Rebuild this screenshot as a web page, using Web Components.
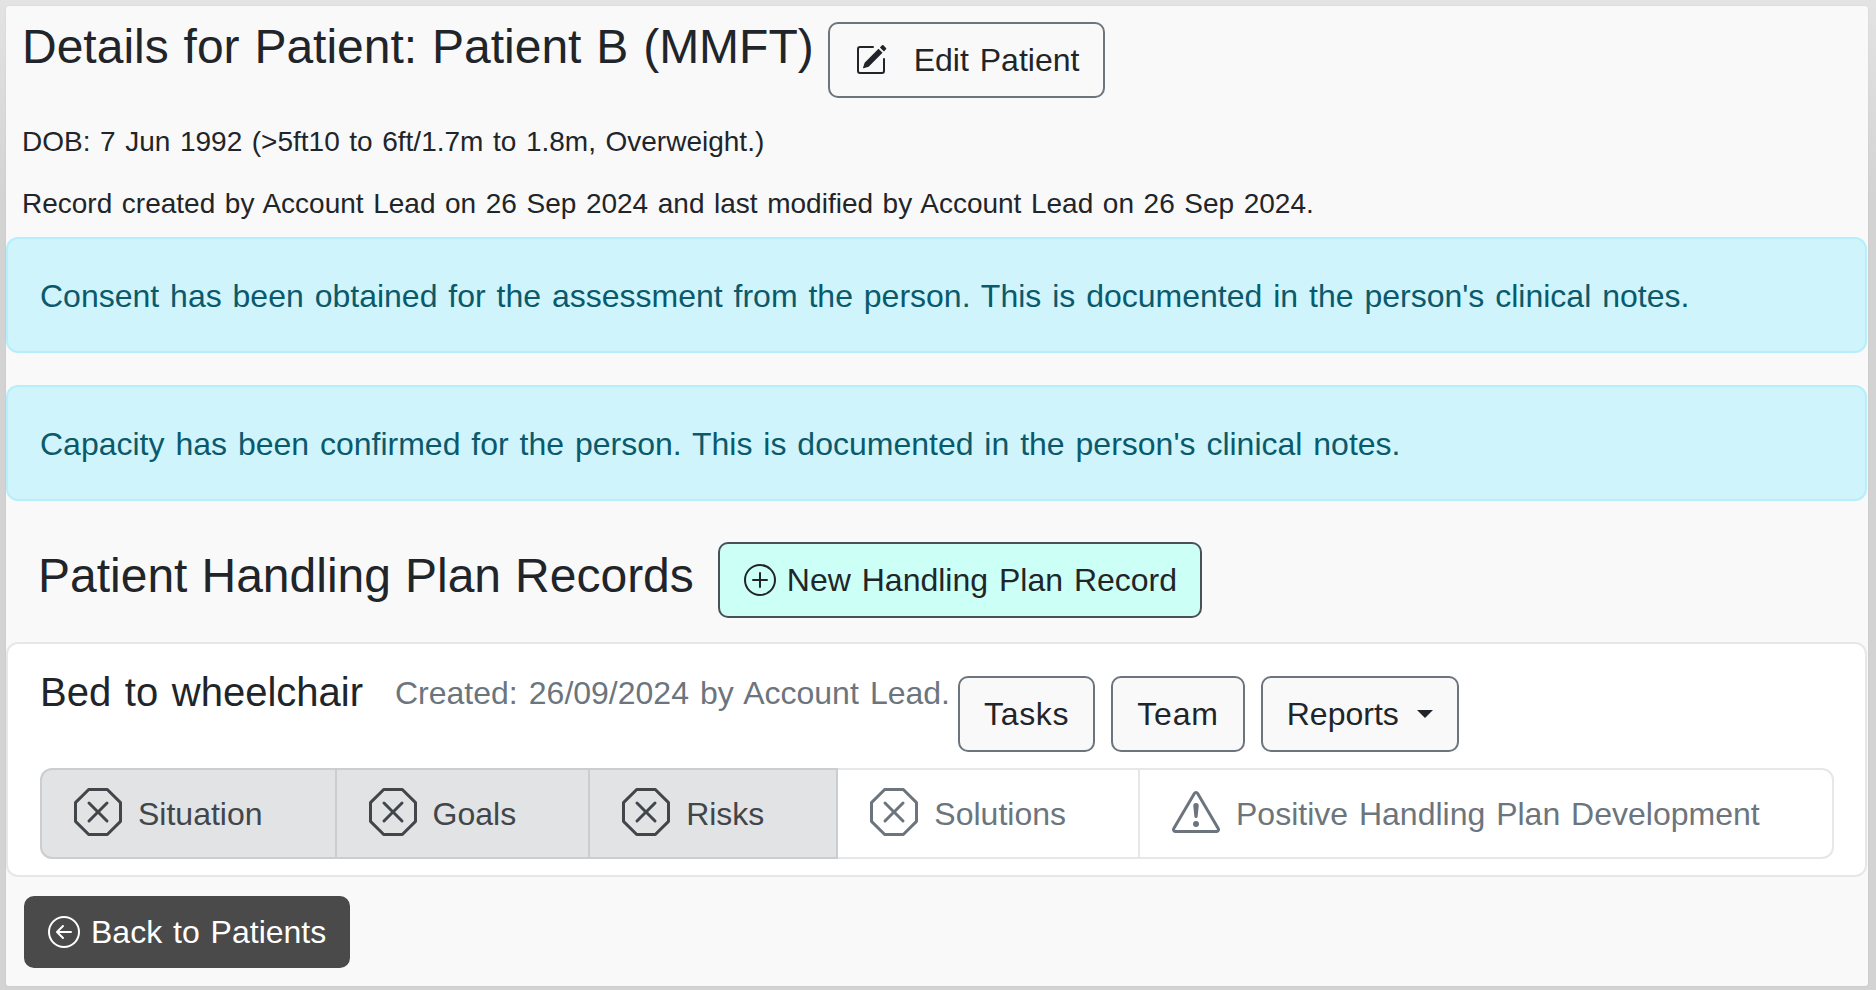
<!DOCTYPE html>
<html lang="en"><head><meta charset="utf-8"><title>Patient</title>
<style>
html,body{margin:0;padding:0;}
body{height:990px;overflow:hidden;background:linear-gradient(#e3e3e3 0,#d3d3d3 200px);font-family:"Liberation Sans",Arial,sans-serif;color:#212529;font-size:32px;line-height:48px;word-spacing:2px;}
</style></head><body>
<patient-page>
  <page-head></page-head>
  <info-alert>Consent has been obtained for the assessment from the person. This is documented in the person's clinical notes.</info-alert>
  <info-alert>Capacity has been confirmed for the person. This is documented in the person's clinical notes.</info-alert>
  <records-head></records-head>
  <record-card></record-card>
  <back-button></back-button>
</patient-page>
<script>
const I={
 pencil:'<path d="M15.502 1.94a.5.5 0 0 1 0 .706L14.459 3.69l-2-2L13.502.646a.5.5 0 0 1 .707 0l1.293 1.293zm-1.75 2.456-2-2L4.939 9.21a.5.5 0 0 0-.121.196l-.805 2.414a.25.25 0 0 0 .316.316l2.414-.805a.5.5 0 0 0 .196-.12l6.813-6.814z"/><path fill-rule="evenodd" d="M1 13.5A1.5 1.5 0 0 0 2.5 15h11a1.5 1.5 0 0 0 1.5-1.5v-6a.5.5 0 0 0-1 0v6a.5.5 0 0 1-.5.5h-11a.5.5 0 0 1-.5-.5v-11a.5.5 0 0 1 .5-.5H9a.5.5 0 0 0 0-1H2.5A1.5 1.5 0 0 0 1 2.5v11z"/>',
 plus:'<path d="M8 15A7 7 0 1 1 8 1a7 7 0 0 1 0 14zm0 1A8 8 0 1 0 8 0a8 8 0 0 0 0 16z"/><path d="M8 4a.5.5 0 0 1 .5.5v3h3a.5.5 0 0 1 0 1h-3v3a.5.5 0 0 1-1 0v-3h-3a.5.5 0 0 1 0-1h3v-3A.5.5 0 0 1 8 4z"/>',
 x:'<path d="M4.54.146A.5.5 0 0 1 4.893 0h6.214a.5.5 0 0 1 .353.146l4.394 4.394a.5.5 0 0 1 .146.353v6.214a.5.5 0 0 1-.146.353l-4.394 4.394a.5.5 0 0 1-.353.146H4.893a.5.5 0 0 1-.353-.146L.146 11.46A.5.5 0 0 1 0 11.107V4.893a.5.5 0 0 1 .146-.353L4.54.146zM5.1 1 1 5.1v5.8L5.1 15h5.8l4.1-4.1V5.1L10.9 1H5.1z"/><path d="M4.646 4.646a.5.5 0 0 1 .708 0L8 7.293l2.646-2.647a.5.5 0 0 1 .708.708L8.707 8l2.647 2.646a.5.5 0 0 1-.708.708L8 8.707l-2.646 2.647a.5.5 0 0 1-.708-.708L7.293 8 4.646 5.354a.5.5 0 0 1 0-.708z"/>',
 warn:'<path d="M7.938 2.016A.13.13 0 0 1 8.002 2a.13.13 0 0 1 .063.016.146.146 0 0 1 .054.057l6.857 11.667c.036.06.035.124.002.183a.163.163 0 0 1-.054.06.116.116 0 0 1-.066.017H1.146a.115.115 0 0 1-.066-.017.163.163 0 0 1-.054-.06.176.176 0 0 1 .002-.183L7.884 2.073a.147.147 0 0 1 .054-.057zm1.044-.45a1.13 1.13 0 0 0-1.96 0L.165 13.233c-.457.778.091 1.767.98 1.767h13.713c.889 0 1.438-.99.98-1.767L8.982 1.566z"/><path d="M7.002 12a1 1 0 1 1 2 0 1 1 0 0 1-2 0zM7.1 5.995a.905.905 0 1 1 1.8 0l-.35 3.507a.552.552 0 0 1-1.1 0L7.1 5.995z"/>',
 back:'<path fill-rule="evenodd" d="M1 8a7 7 0 1 0 14 0A7 7 0 0 0 1 8zm15 0A8 8 0 1 1 0 8a8 8 0 0 1 16 0zm-4.5-.5a.5.5 0 0 1 0 1H5.707l2.147 2.146a.5.5 0 0 1-.708.708l-3-3a.5.5 0 0 1 0-.708l3-3a.5.5 0 1 1 .708.708L5.707 7.5H11.5z"/>'
};
function def(name,css,html){
  customElements.define(name,class extends HTMLElement{
    constructor(){super();const s=this.attachShadow({mode:'open'});
      s.innerHTML='<style>'+css+'</style>'+(typeof html==='function'?html(this):html);}
  });
}
def('bs-icon',':host{display:inline-flex;flex:none}svg{display:block;fill:currentColor}',
  el=>{const z=el.getAttribute('size')||32;return `<svg width="${z}" height="${z}" viewBox="0 0 16 16">${I[el.getAttribute('name')]}</svg>`});
def('ui-button',`:host{display:inline-flex;flex:none;align-items:center;box-sizing:border-box;height:76px;padding:0 24px;border:2px solid #6c757d;border-radius:10px;background:#f9f9f9;color:#212529;font-size:32px;line-height:48px;white-space:nowrap}
  :host([variant=new]){background:#ccfff6;border-color:#495057;}
  :host([variant=dark]){background:#4a4a4a;border-color:#4a4a4a;color:#fff;height:72px;padding:0 22px}
  :host([variant=plain]){background:transparent;padding:0 24px 0 25px}`,'<slot></slot>');
def('patient-page',`:host{display:block;box-sizing:border-box;margin:6px 8px 0 6px;height:980px;padding-right:1px;background:#f9f9f9;box-shadow:0 0 2px rgba(0,0,0,.08);border-radius:3px}`,'<slot></slot>');
def('page-head',`:host{display:block;padding:0 16px;height:231px}
  .row{display:flex;align-items:flex-start;gap:14px;padding-top:16px;height:92px;box-sizing:border-box}
  h3{margin:-4px 0 0;font:400 48px/58px "Liberation Sans",Arial,sans-serif;white-space:nowrap;word-spacing:1.5px}
  p{margin:0;font-size:28px;line-height:43px;word-spacing:1.8px}
  .dob{margin-top:22px}.rec{margin-top:19px}
  bs-icon{margin-right:27px}`,
  `<div class="row"><h3>Details for Patient: Patient B (MMFT)</h3><ui-button variant="plain"><bs-icon name="pencil"></bs-icon>Edit Patient</ui-button></div>
   <p class="dob">DOB: 7 Jun 1992 (&gt;5ft10 to 6ft/1.7m to 1.8m, Overweight.)</p>
   <p class="rec">Record created by Account Lead on 26 Sep 2024 and last modified by Account Lead on 26 Sep 2024.</p>`);
def('info-alert',`:host{display:block;box-sizing:border-box;height:116px;margin-bottom:32px;padding:33px 32px 31px;border:2px solid #b6effb;border-radius:12px;background:#cff4fc;color:#0a5a6b;font-size:32px;line-height:48px}`,'<slot></slot>');
def('records-head',`:host{display:flex;align-items:flex-start;gap:24px;height:76px;margin:41px 0 24px;padding-left:32px}
  h3{margin:5px 0 0;font:400 48px/58px "Liberation Sans",Arial,sans-serif;white-space:nowrap;word-spacing:.7px}
  bs-icon{margin-right:11px}`,
  `<h3>Patient Handling Plan Records</h3><ui-button variant="new" style="padding-right:23px"><bs-icon name="plus"></bs-icon>New Handling Plan Record</ui-button>`);
def('record-card',`:host{display:block;box-sizing:border-box;height:235px;background:#fff;border:2px solid #e6e7e8;border-radius:12px;padding:0 32px}
  .top{display:flex;align-items:flex-start;height:124px;box-sizing:border-box}
  h5{margin:24px 32px 0 0;font:400 40px/48px "Liberation Sans",Arial,sans-serif;white-space:nowrap;word-spacing:2.5px}
  .meta{margin-top:25px;color:#6c757d;font-size:32px;line-height:48px;white-space:nowrap;word-spacing:2.2px}
  .btns{display:flex;gap:16px;margin:32px 0 0 8px}
  .caret{display:inline-block;margin-left:18px;border-top:8px solid currentColor;border-left:8px solid transparent;border-right:8px solid transparent}
  .tabs{display:flex;box-sizing:border-box;height:91px}`,
  `<div class="top"><h5>Bed to wheelchair</h5><span class="meta">Created: 26/09/2024 by Account Lead.</span>
    <div class="btns"><ui-button style="letter-spacing:.7px">Tasks</ui-button><ui-button style="letter-spacing:.8px">Team</ui-button><ui-button>Reports<span class="caret"></span></ui-button></div></div>
   <div class="tabs">
    <plan-tab done first icon="x">Situation</plan-tab><plan-tab done icon="x">Goals</plan-tab><plan-tab done icon="x">Risks</plan-tab>
    <plan-tab icon="x">Solutions</plan-tab><plan-tab icon="warn" last>Positive Handling Plan Development</plan-tab>
   </div>`);
def('plan-tab',`:host{display:flex;align-items:center;box-sizing:border-box;height:91px;padding:0 72px 0 32px;color:#6c757d;background:#fff;border:2px solid #e6e7e8;border-left:0;white-space:nowrap;font-size:32px}
  :host([done]){background:#e2e3e5;color:#41464b;border-color:#cccdcf}
  :host([first]){border-left:2px solid #cccdcf;border-radius:12px 0 0 12px}
  :host([last]){flex:1;border-radius:0 12px 12px 0}
  bs-icon{margin-right:16px;margin-top:-4px}`,
  el=>`<bs-icon name="${el.getAttribute('icon')}" size="48"></bs-icon><slot></slot>`);
def('back-button',`:host{display:block;margin:19px 0 0 18px}bs-icon{margin-right:11px}`,
  `<ui-button variant="dark"><bs-icon name="back"></bs-icon>Back to Patients</ui-button>`);
</script>
</body></html>
